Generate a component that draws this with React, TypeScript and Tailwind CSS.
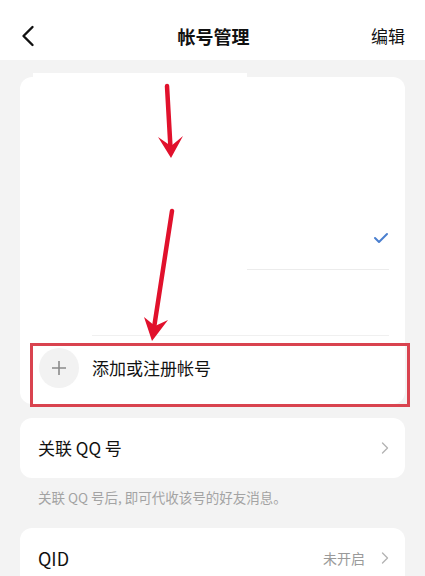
import { ChevronRight } from 'lucide-react'

const font = { fontFamily: '"Noto Sans CJK SC", "Noto Sans", sans-serif' }

export default function App() {
  return (
    <div className="relative w-[425px] h-[576px] overflow-hidden bg-[#f3f3f3]" style={font}>
      {/* 顶栏 */}
      <div className="h-[60px] bg-white grid grid-cols-[1fr_auto_1fr] items-center pt-[12px] px-[20px]">
        <svg width="14" height="22" viewBox="0 0 14 22" className="ml-[1px]">
          <path d="M11.5 2 L2.5 11 L11.5 20" fill="none" stroke="#111" strokeWidth="2.4" strokeLinecap="round" strokeLinejoin="round" />
        </svg>
        <div className="text-[18px] font-bold text-[#111] ml-[2px]">帐号管理</div>
        <div className="text-[17px] text-[#111] justify-self-end">编辑</div>
      </div>

      {/* 帐号列表 */}
      <div className="relative mx-[20px] mt-[17px] h-[327px] bg-white rounded-[12px]">
        <div className="absolute left-[13px] -top-[4px] w-[214px] h-[4px] bg-white" />
        <svg width="16" height="12" viewBox="0 0 16 12" className="absolute left-[353px] top-[155px]">
          <path d="M2 6 L6 10 L14 2" fill="none" stroke="#4a7fcf" strokeWidth="2" strokeLinecap="round" strokeLinejoin="round" />
        </svg>
        <div className="absolute left-[227px] right-[16px] top-[192px] h-px bg-[#ececec]" />
        <div className="absolute left-[72px] right-[16px] top-[258px] h-px bg-[#f0f0f0]" />
        <div className="absolute left-[19px] top-[271px] flex items-center gap-[13px]">
          <div className="w-[40px] h-[40px] rounded-full bg-[#f2f2f2] flex items-center justify-center">
            <svg width="16" height="16" viewBox="0 0 16 16">
              <path d="M8 1 V15 M1 8 H15" stroke="#8a8a8a" strokeWidth="1.6" />
            </svg>
          </div>
          <div className="text-[17px] text-[#111]">添加或注册帐号</div>
        </div>
      </div>

      {/* 关联QQ号 */}
      <div className="mx-[20px] mt-[14px] h-[60px] bg-white rounded-[12px] flex items-center pl-[18px] pr-[10px]">
        <div className="flex-1 text-[17px] text-[#111]">关联 QQ 号</div>
        <ChevronRight size={20} strokeWidth={1.6} className="text-[#b3b3b3]" />
      </div>
      <div className="px-[38px] pt-[9px] text-[13.5px] text-[#a3a3a3]">关联 QQ 号后, 即可代收该号的好友消息。</div>

      {/* QID */}
      <div className="mx-[20px] mt-[21px] h-[60px] bg-white rounded-[12px] flex items-center pl-[18px] pr-[10px]">
        <div className="flex-1 text-[18px] text-[#111]">QID</div>
        <div className="text-[14px] text-[#9a9a9a] mr-[10px]">未开启</div>
        <ChevronRight size={20} strokeWidth={1.6} className="text-[#b3b3b3]" />
      </div>

      {/* 红框 */}
      <div className="absolute left-[30px] top-[343px] w-[380px] h-[64px] border-[3px] border-[#d9434f]" />

      {/* 红色箭头 */}
      <svg width="425" height="576" className="absolute inset-0 pointer-events-none">
        <path d="M167 86 L170.5 148" stroke="#e1112c" strokeWidth="4.5" strokeLinecap="round" />
        <path d="M158 137 L171 158 L183 136 L171 146 Z" fill="#e1112c" />
        <path d="M172 211 L154 328" stroke="#e1112c" strokeWidth="4.5" strokeLinecap="round" />
        <path d="M144 317 L152 341 L168 320 L155 326 Z" fill="#e1112c" />
      </svg>
    </div>
  )
}
